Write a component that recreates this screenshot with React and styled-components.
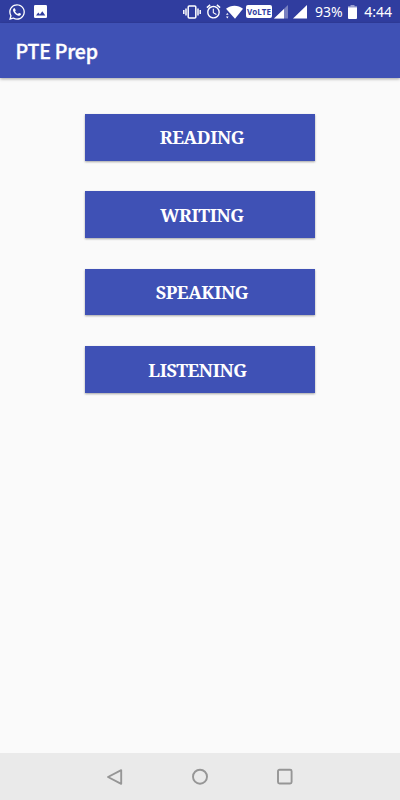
import styled, {createGlobalStyle} from 'styled-components';
import {MdAlarm} from 'react-icons/md';
import {FaWhatsapp} from 'react-icons/fa';

const GlobalStyle = createGlobalStyle`
    * {
        box-sizing: border-box;
    }

    body {
        margin: 0;
        background-color: #fafafa;
    }
`;

const Screen = styled.div`
    display: flex;
    flex-direction: column;
    height: 800px;
    background-color: #fafafa;
    overflow: hidden;
`;

const StatusBar = styled.div`
    display: flex;
    align-items: center;
    height: 23px;
    padding: 0 8px 0 8px;
    background-color: #303d9f;
    color: #fff;
    font-family: 'Noto Sans', sans-serif;
    font-size: 14px;
    line-height: 23px;

    svg {
        display: block;
        flex: none;
    }
`;

const Notifications = styled.div`
    display: flex;
    align-items: center;
    gap: 8px;
    flex: 1;
`;

const Indicators = styled.div`
    display: flex;
    align-items: center;
`;

const Slot = styled.span`
    display: flex;
    justify-content: ${({$align}) => $align || 'flex-start'};
    width: ${({$width}) => $width}px;
    white-space: nowrap;
`;

const VolteBadge = styled.span`
    display: flex;
    align-items: center;
    justify-content: center;
    width: 26px;
    height: 13px;
    border-radius: 2px;
    background-color: #fff;
    color: #303d9f;
    font-family: 'Open Sans', sans-serif;
    font-size: 8px;
    font-weight: 700;
    line-height: 13px;
`;

const AppBar = styled.header`
    display: flex;
    align-items: center;
    flex: none;
    height: 55px;
    padding: 0 15.5px;
    background-color: #3f51b5;
    box-shadow: 0 1px 3px rgba(0, 0, 0, 0.35);
`;

const Title = styled.h1`
    margin: 0;
    color: #fff;
    font-family: 'Noto Sans CJK SC', sans-serif;
    font-size: 19.5px;
    font-weight: 500;
    letter-spacing: -0.2px;
    line-height: 24px;
    -webkit-text-stroke: 0.4px #fff;
`;

const Menu = styled.main`
    display: flex;
    flex-direction: column;
    align-items: center;
    flex: 1;
    gap: 30.9px;
    padding-top: 36.1px;
`;

const MenuButton = styled.button`
    width: 230px;
    height: 46.5px;
    padding: 0 ${({$right}) => $right || 0}px 0 ${({$left}) => $left || 0}px;
    border: 0;
    background-color: #3f51b5;
    box-shadow: 0 1px 2px rgba(0, 0, 0, 0.35);
    color: #fff;
    font-family: 'Noto Serif', 'DejaVu Serif Condensed', 'DejaVu Serif', serif;
    font-size: 18px;
    font-weight: 700;
    letter-spacing: -0.4px;
    line-height: 24px;
    text-align: center;
    white-space: nowrap;
`;

const NavBar = styled.nav`
    display: flex;
    align-items: center;
    justify-content: center;
    gap: 67px;
    flex: none;
    height: 47px;
    background-color: #eaeaea;

    svg {
        display: block;
        fill: none;
        stroke: #969696;
        stroke-width: 1.9;
        stroke-linejoin: round;
    }
`;

const sections = [
    {name: 'READING', left: 4},
    {name: 'WRITING', left: 4},
    {name: 'SPEAKING', left: 4},
    {name: 'LISTENING', right: 5},
];

const PictureIcon = () => (
    <svg width="13" height="13" viewBox="0 0 13 13">
        <rect width="13" height="13" rx="1.3" fill="#fff"/>
        <path d="M2 10.5 4.3 7.5 5.9 9.4 8.3 6.3 11.3 10.5Z" fill="#303d9f"/>
    </svg>
);

const VibrateIcon = () => (
    <svg width="18" height="14" viewBox="0 0 18 14" fill="none" stroke="#fff" strokeWidth="1.5">
        <rect x="5.2" y="1" width="7.6" height="12" rx="1"/>
        <path d="M.8 5V9M3 3.5V10.5M15 3.5V10.5M17.2 5V9"/>
    </svg>
);

const WifiIcon = () => (
    <svg width="18" height="14" viewBox="0 0 18 14" fill="#fff">
        <path d="M0 3.8C5-.2 12-.2 17 3.8L9 13.8Z"/>
        <path d="M0 9.8 1.3 8 2.6 9.8ZM0 11.6 1.3 13.4 2.6 11.6Z"/>
    </svg>
);

const SignalIcon = ({dim}) => (
    <svg width="15" height="14" viewBox="0 0 15 14">
        <path d="M14 0V13.5H0Z" fill="#fff" opacity={dim ? 0.35 : 1}/>
        {dim && <path d="M10 4V13.5H0Z" fill="#fff"/>}
    </svg>
);

const BatteryIcon = () => (
    <svg width="9" height="14" viewBox="0 0 9 14">
        <path d="M2.5 0H6.5V1.2H9V3H0V1.2H2.5Z" fill="#fff" opacity="0.5"/>
        <path d="M0 2.5H9V13Q9 14 8 14H1Q0 14 0 13Z" fill="#fff"/>
    </svg>
);

const App = () => {
    return (
        <Screen>
            <GlobalStyle/>
            <StatusBar>
                <Notifications>
                    <FaWhatsapp size={18}/>
                    <PictureIcon/>
                </Notifications>
                <Indicators>
                    <Slot $width={22}><VibrateIcon/></Slot>
                    <Slot $width={21}><MdAlarm size={17}/></Slot>
                    <Slot $width={20}><WifiIcon/></Slot>
                    <Slot $width={28}><VolteBadge>VoLTE</VolteBadge></Slot>
                    <Slot $width={19}><SignalIcon dim/></Slot>
                    <Slot $width={22}><SignalIcon/></Slot>
                    <Slot $width={33}>93%</Slot>
                    <Slot $width={15}><BatteryIcon/></Slot>
                    <Slot $width={29} $align="flex-end">4:44</Slot>
                </Indicators>
            </StatusBar>
            <AppBar>
                <Title>PTE Prep</Title>
            </AppBar>
            <Menu>
                {sections.map(({name, left, right}) => (
                    <MenuButton key={name} $left={left} $right={right}>{name}</MenuButton>
                ))}
            </Menu>
            <NavBar>
                <svg width="18" height="18" viewBox="0 0 18 18">
                    <path d="M15.2 2.2V15.8L2 9Z"/>
                </svg>
                <svg width="18" height="18" viewBox="0 0 18 18">
                    <circle cx="9" cy="8.7" r="7"/>
                </svg>
                <svg width="18" height="18" viewBox="0 0 18 18">
                    <rect x="2" y="1.7" width="13.6" height="13.8" rx="1.5"/>
                </svg>
            </NavBar>
        </Screen>
    );
};

export default App;
